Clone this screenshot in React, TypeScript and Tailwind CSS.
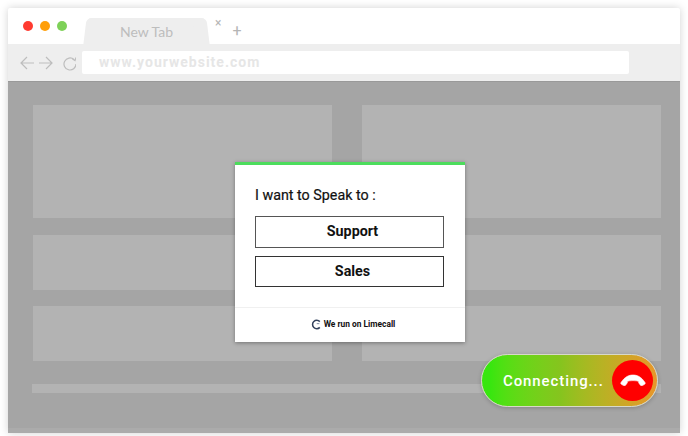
function Block({ className }: { className: string }) {
  return <div className={`bg-[#b3b3b3] ${className}`} />;
}

export default function App() {
  return (
    <div className="relative h-[436px] w-[688px] overflow-hidden bg-white pl-2 pt-2 font-['Roboto',sans-serif]">
      <div className="flex h-[425px] w-[672px] flex-col rounded-t-[2px] bg-white shadow-[0_0_8px_rgba(0,0,0,0.18)]">
        {/* tab strip */}
        <div className="flex h-[36px] items-end pl-[15px]">
          <div className="flex items-center gap-[7px] self-center">
            <span className="h-[10px] w-[10px] rounded-full bg-[#ff3b30]" />
            <span className="h-[10px] w-[10px] rounded-full bg-[#ff9f0a]" />
            <span className="h-[10px] w-[10px] rounded-full bg-[#7ed158]" />
          </div>
          <div className="relative ml-[21px] flex h-[26px] w-[117px] items-center justify-center rounded-t-[4px] bg-[#eeeeee] font-['Lato',sans-serif] text-[14px] text-[#bdbdbd] before:absolute before:inset-y-0 before:-left-[3px] before:w-[14px] before:-skew-x-[7deg] before:rounded-tl-[5px] before:bg-[#eeeeee] after:absolute after:inset-y-0 after:-right-[3px] after:w-[14px] after:skew-x-[7deg] after:rounded-tr-[5px] after:bg-[#eeeeee]">
            <span className="relative z-10">New Tab</span>
          </div>
          <span className="mb-[15px] ml-[10px] text-[12px] leading-none text-[#b5b5b5]">×</span>
          <span className="mb-[5px] ml-[11px] text-[16px] leading-none text-[#b5b5b5]">+</span>
        </div>

        {/* address bar */}
        <div className="flex h-[37px] items-center bg-[#eeeeee] pl-[12px]">
          <svg width="56" height="16" viewBox="0 0 56 16" fill="none" stroke="#bdbdbd" strokeWidth="1.2" className="shrink-0">
            <path d="M14 8H1M7 2 1 8l6 6" />
            <path d="M19 8h13M26 2l6 6-6 6" />
            <path d="M54 4.500A6 6 0 1 0 56 9" />
            <path d="M52.500 4 55 5.500 56 2.500" />
          </svg>
          <div className="ml-[6px] flex h-[23px] w-[547px] items-center rounded-[2px] bg-white pl-[17px] text-[14px] font-bold tracking-[1px] text-[#e6e6e6]">
            www.yourwebsite.com
          </div>
        </div>

        {/* page */}
        <div className="flex flex-1 flex-col border-t border-[#999999] bg-[#a5a5a5]">
          <div className="flex-1 pl-[25px] pr-[19px] pt-[23px]">
            <div className="grid grid-cols-2 gap-x-[30px]">
              <Block className="h-[113px]" />
              <Block className="h-[113px]" />
              <Block className="mt-[17px] h-[55px]" />
              <Block className="mt-[17px] h-[55px]" />
              <Block className="mt-[16px] h-[55px]" />
              <Block className="mt-[16px] h-[55px]" />
            </div>
            <Block className="-ml-px mt-[23px] h-[9px]" />
          </div>
          <div className="h-[5px] bg-[#ababab]" />
        </div>
      </div>

      {/* modal */}
      <div className="absolute left-[235px] top-[162px] flex h-[180px] w-[230px] flex-col border-t-[3px] border-[#4cdc5c] bg-white shadow-[0_1px_4px_rgba(0,0,0,0.35)]">
        <div className="flex-1 px-[20px] pt-[20px]">
          <p className="text-[14.300px] leading-[20px] text-[#111111] [-webkit-text-stroke:0.2px_#111111]">I want to Speak to :</p>
          <div className="mt-[11px] flex h-[32px] w-[189px] items-center justify-center border border-[#555555] pl-[6px] text-[14.300px] font-bold text-[#111111]">
            Support
          </div>
          <div className="mt-[8px] flex h-[31px] w-[189px] items-center justify-center border border-[#333333] pl-[6px] text-[14.300px] font-bold text-[#111111]">
            Sales
          </div>
        </div>
        <div className="flex h-[35px] items-center justify-center gap-[2px] border-t border-[#f0f0f0] pb-[1px] pl-[6px] text-[8.400px] font-bold text-[#111111]">
          <svg width="11" height="11" viewBox="0 0 10 10" fill="none" strokeWidth="1.4" stroke="#33415c">
            <path d="M8 2.400A3.800 3.800 0 1 0 8 7.600" />
            <path d="M7.600 4.200H5.200" stroke="#8a97ad" strokeWidth="1" />
          </svg>
          We run on Limecall
        </div>
      </div>

      {/* call pill */}
      <div className="absolute left-[481px] top-[354px] flex h-[53px] w-[177px] items-center justify-between rounded-full border border-[#d9d9c8] bg-gradient-to-r from-[#38e60f] from-5% via-[#86c41e] via-45% to-[#e8952a] pl-[21px] pr-[4px] shadow-[0_1px_4px_rgba(0,0,0,0.2)]">
        <span className="pt-[2px] text-[15px] font-medium tracking-[0.900px] text-white">Connecting...</span>
        <span className="flex h-[41px] w-[41px] items-center justify-center rounded-full bg-[#ff0000] pb-[2px]">
          <svg width="26" height="12" viewBox="0 0 26 12" fill="white" stroke="white" strokeWidth="0.6">
            <path d="M1 8.500C5 2.500 9 1 13 1s8 1.500 12 7.500c.4.700.2 1.300-.4 1.800l-2.200 1.300c-.7.400-1.400.3-1.900-.3l-1.700-2.300c-.3-.5-.3-1 0-1.500C16.500 6.300 9.500 6.300 7.200 7.500c.3.500.3 1 0 1.500l-1.700 2.300c-.5.600-1.200.7-1.900.3l-2.200-1.300C.8 9.800.6 9.200 1 8.500Z" />
          </svg>
        </span>
      </div>
    </div>
  );
}
